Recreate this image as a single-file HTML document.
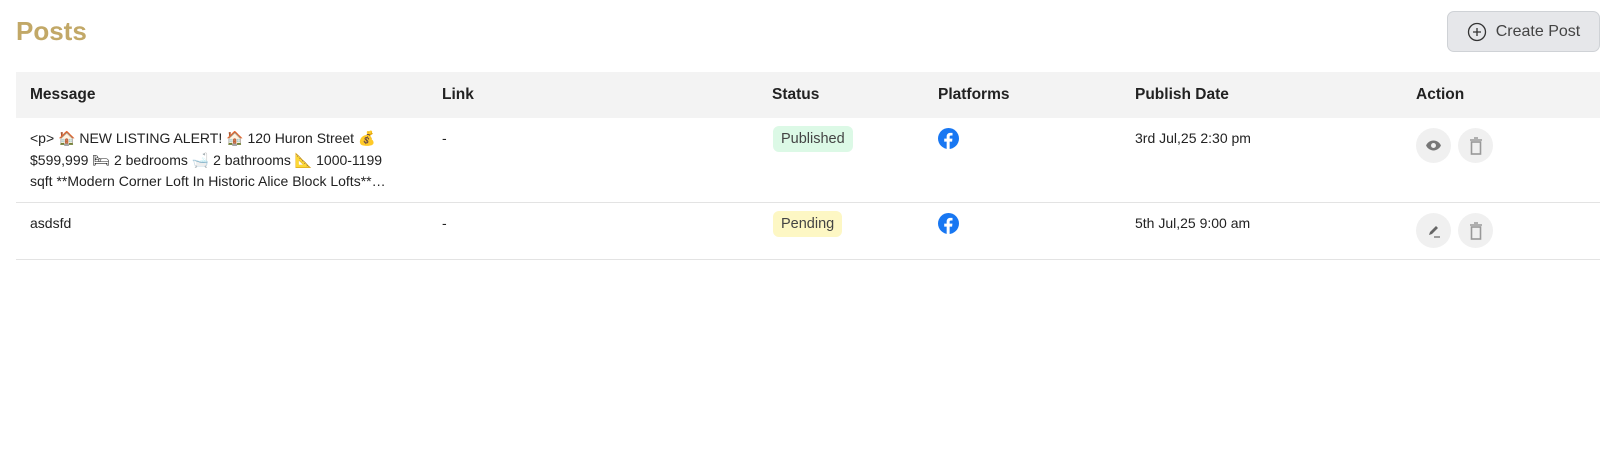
<!DOCTYPE html>
<html><head><meta charset="utf-8"><style>
*{margin:0;padding:0;box-sizing:border-box}
body{width:1619px;height:461px;background:#fff;font-family:"Liberation Sans","Noto Sans CJK SC",sans-serif;color:#222;position:relative;overflow:hidden}
.title{position:absolute;left:16px;top:16px;font-size:26px;color:#c2a867;font-weight:bold}
.btn{position:absolute;left:1447px;top:11px;width:153px;height:41px;background:#e6e7ea;border:1px solid #cfd2d6;border-radius:7px;display:flex;align-items:center;justify-content:center;gap:9px;font-size:16px;color:#444}
.hdr{position:absolute;left:16px;top:72px;width:1584px;height:46px;background:#f3f3f3}
.h{position:absolute;top:86px;font-size:15.5px;font-weight:bold;color:#222}
.t{position:absolute;font-size:14px;color:#222;line-height:21.5px}
.line{position:absolute;left:16px;width:1584px;height:1px;background:#e3e3e3}
.badge{position:absolute;left:773px;height:26px;border-radius:6px;font-size:14.5px;color:#444;padding:0 8px;line-height:26px}
.fb{position:absolute;left:938px;width:21px;height:21px}
.ic{position:absolute;width:35px;height:35px;border-radius:50%;background:#f0f0f0;display:flex;align-items:center;justify-content:center}
</style></head><body>
<div class="title">Posts</div>
<div class="btn"><svg width="20" height="20" viewBox="0 0 20 20"><circle cx="10" cy="10" r="8.5" fill="none" stroke="#333" stroke-width="1.3"/><path d="M10 6v8M6 10h8" stroke="#333" stroke-width="1.3"/></svg>Create Post</div>
<div class="hdr"></div>
<div class="h" style="left:30px">Message</div>
<div class="h" style="left:442px">Link</div>
<div class="h" style="left:772px">Status</div>
<div class="h" style="left:938px">Platforms</div>
<div class="h" style="left:1135px">Publish Date</div>
<div class="h" style="left:1416px">Action</div>

<div class="t" style="left:30px;top:128px;width:400px">&lt;p&gt; 🏠 NEW LISTING ALERT! 🏠 120 Huron Street 💰<br>$599,999 🛏 2 bedrooms 🛁 2 bathrooms 📐 1000-1199<br>sqft **Modern Corner Loft In Historic Alice Block Lofts**…</div>
<div class="t" style="left:442px;top:128px">-</div>
<div class="badge" style="top:126px;background:#dcf9e6">Published</div>
<svg class="fb" style="top:128px" viewBox="0 0 24 24"><circle cx="12" cy="12" r="12" fill="#1877f2"/><path d="M13.3 24v-8.5h2.8l.4-3.3h-3.2v-2.1c0-.9.3-1.6 1.6-1.6h1.7V5.6c-.3 0-1.3-.1-2.5-.1-2.5 0-4.2 1.5-4.2 4.3v2.4H7.1v3.3h2.8V24z" fill="#fff"/></svg>
<div class="t" style="left:1135px;top:128px">3rd Jul,25 2:30 pm</div>
<div class="ic" style="left:1416px;top:128px"><svg width="17" height="17" viewBox="0 0 24 24"><path d="M12 5C7 5 3 8.5 1.5 12 3 15.5 7 19 12 19s9-3.5 10.5-7C21 8.5 17 5 12 5z" fill="#777"/><circle cx="12" cy="12" r="3.5" fill="#f0f0f0"/></svg></div>
<div class="ic" style="left:1458px;top:128px"><svg width="16" height="18" viewBox="0 0 16 18"><path d="M2 3h12M6 1h4" stroke="#999" stroke-width="1.6"/><rect x="3.5" y="5" width="9" height="12" fill="none" stroke="#999" stroke-width="1.6"/></svg></div>
<div class="line" style="top:202px"></div>

<div class="t" style="left:30px;top:213px">asdsfd</div>
<div class="t" style="left:442px;top:213px">-</div>
<div class="badge" style="top:211px;background:#fdf7c4">Pending</div>
<svg class="fb" style="top:213px" viewBox="0 0 24 24"><circle cx="12" cy="12" r="12" fill="#1877f2"/><path d="M13.3 24v-8.5h2.8l.4-3.3h-3.2v-2.1c0-.9.3-1.6 1.6-1.6h1.7V5.6c-.3 0-1.3-.1-2.5-.1-2.5 0-4.2 1.5-4.2 4.3v2.4H7.1v3.3h2.8V24z" fill="#fff"/></svg>
<div class="t" style="left:1135px;top:213px">5th Jul,25 9:00 am</div>
<div class="ic" style="left:1416px;top:213px"><svg width="16" height="16" viewBox="0 0 16 16"><path d="M3 12l1-3 6-6 2 2-6 6z" fill="#666"/><path d="M8 14h6" stroke="#666" stroke-width="1.2"/></svg></div>
<div class="ic" style="left:1458px;top:213px"><svg width="16" height="18" viewBox="0 0 16 18"><path d="M2 3h12M6 1h4" stroke="#999" stroke-width="1.6"/><rect x="3.5" y="5" width="9" height="12" fill="none" stroke="#999" stroke-width="1.6"/></svg></div>
<div class="line" style="top:259px"></div>
</body></html>
